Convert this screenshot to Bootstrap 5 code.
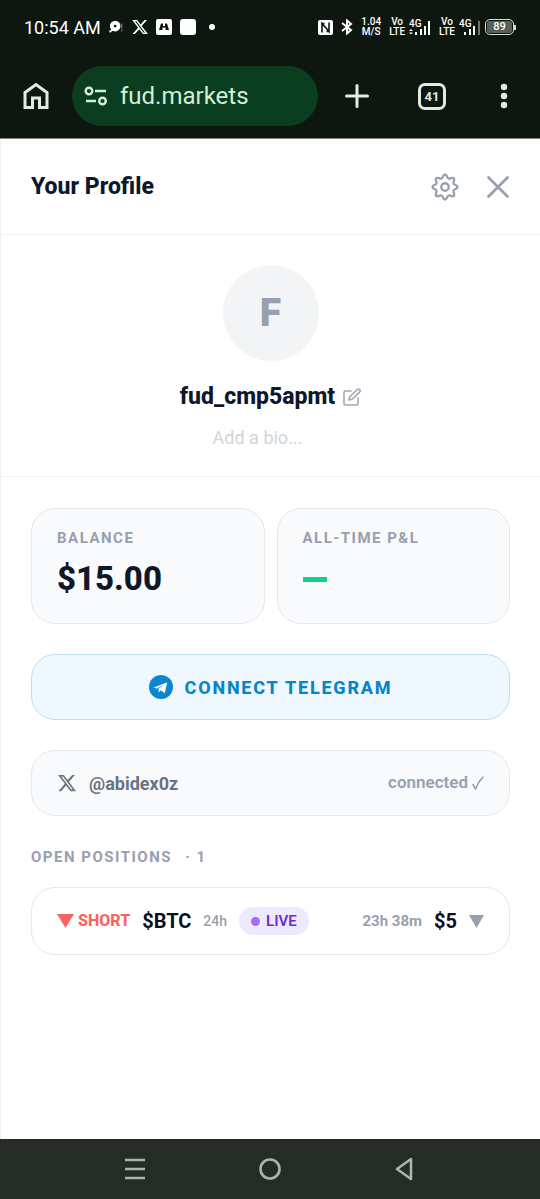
<!DOCTYPE html>
<html lang="en">
<head>
<meta charset="utf-8">
<meta name="viewport" content="width=device-width, initial-scale=1">
<title>Your Profile - fud.markets</title>
<link href="https://cdn.jsdelivr.net/npm/bootstrap@5.3.0/dist/css/bootstrap.min.css" rel="stylesheet">
<style>
  :root {
    --ink: #0f172a;
    --muted: #98a0ae;
    --line: #e5e7eb;
    --chrome: #0d160f;
    --chrome-fg: #e0ece1;
  }
  body { font-family: Roboto, "Liberation Sans", sans-serif; color: var(--ink); background: #fff; }
  button { font-family: inherit; }
  svg { display: block; flex-shrink: 0; }
  .plain { background: none; border: 0; padding: 0; display: flex; align-items: center; justify-content: center; }

  /* phone status bar */
  .status { background: var(--chrome); color: #fff; height: 54px; padding: 0 24px; font-size: 18px; }
  .tiny { font-size: 10px; line-height: 10px; font-weight: 500; text-align: center; }
  .signal { width: 22px; }
  .level { width: 29px; height: 16px; border: 1px solid #d8dcd8; border-radius: 5px; padding: 1px; }
  .level span { background: #596059; border-radius: 2px; font-size: 11px; line-height: 12px; font-weight: 500; display: block; text-align: center; }
  .nub { width: 2px; height: 5px; background: #d8dcd8; }

  /* browser toolbar */
  .toolbar { background: var(--chrome); height: 85px; border-bottom: 1px solid #7d837e; color: var(--chrome-fg); }
  .tool { width: 72px; height: 84px; color: var(--chrome-fg); flex-shrink: 0; }
  .tool-wide { width: 78px; }
  .address { background: #0b3d20; height: 60px; border-radius: 30px; padding: 0 12px; gap: 12px; min-width: 0; }
  .address input { background: none; border: 0; padding: 0; color: #d3efd5; font-size: 24px; min-width: 0; width: 100%; outline: 0; }
  .address .plain { color: #d3efd5; }
  .tabs { width: 28px; height: 27px; border: 3px solid var(--chrome-fg); border-radius: 7px; font-size: 13px; line-height: 21px; font-weight: 700; }

  /* profile panel */
  .panel { border-left: 1px solid #eceef1; }
  .panel-head { padding: 0 30px; height: 96px; border-bottom: 1px solid #f0f1f3; color: var(--muted); }
  .panel-head h1 { font-size: 23px; font-weight: 800; color: var(--ink); }
  .who { padding: 30px 30px 24px; border-bottom: 1px solid #f0f1f3; }
  .avatar { width: 96px; height: 96px; background: #f2f4f6; color: var(--muted); font-size: 39px; font-weight: 900; }
  .who h2 { font-size: 23px; line-height: 31px; font-weight: 800; margin: 0; }
  .bio { font-size: 18px; line-height: 28px; color: #d1d5db; padding-right: 26px; }
  .content { padding: 31px 30px; }
  .tile { border: 1px solid var(--line); border-radius: 24px; background: #f9fafc; }
  .stats { gap: 12px; margin-bottom: 30px; }
  .stat { padding: 18px 25px; height: 116px; }
  .caps { font-size: 15px; line-height: 22px; font-weight: 700; letter-spacing: .1em; color: var(--muted); margin: 0; }
  .figure { font-size: 33px; line-height: 42px; height: 42px; font-weight: 800; margin: 9px 0 0; }
  .up { width: 24px; height: 5px; background: #10d08c; }
  .telegram { height: 66px; background: #eff8ff; border-color: #b8e2f4; color: #0884cb; font-size: 18px; font-weight: 800; letter-spacing: .1em; gap: 12px; margin-bottom: 30px; }
  .account { height: 66px; padding: 0 25px; color: #6b7280; font-size: 18px; font-weight: 700; margin-bottom: 30px; }
  .linked { color: var(--muted); font-size: 17px; font-weight: 600; }
  .position { height: 68px; padding: 0 25px; background: #fff; color: #0b1020; margin-top: 19px; gap: 12px; }
  .short { color: #f76464; font-size: 16px; font-weight: 800; }
  .asset { font-size: 20px; font-weight: 700; }
  .term { font-size: 14px; font-weight: 500; color: var(--muted); }
  .left-time { font-size: 15px; font-weight: 700; color: var(--muted); }
  .live { background: #ede9fe; color: #6d28d9; font-size: 15px; font-weight: 600; line-height: 28px; border-radius: 14px; padding: 0 12px; gap: 6px; }
  .live-dot { width: 9px; height: 9px; background: #a66bf5; }

  /* phone navigation */
  .sysnav { background: #242c25; height: 60px; color: #abb3ab; padding: 0 12.5%; }
</style>
</head>
<body>
<div class="d-flex flex-column min-vh-100">

  <div class="status d-flex align-items-center justify-content-between">
    <div class="d-flex align-items-center gap-2">
      <span>10:54 AM</span>
      <svg width="15" height="16" viewBox="0 0 17 16" fill="#fff"><circle cx="7" cy="7" r="6"/><circle cx="1.500" cy="13" r="1.300"/><path d="M3 9l-1 4 4-1z"/><circle cx="7" cy="7" r="1.500" fill="#0d160f"/><path d="M14 4h1v6h-1zM14 11h1v2h-1z" opacity=".6"/></svg>
      <svg width="16" height="16" viewBox="1 1 22 22" fill="#fff"><path d="M18.244 2.250h3.308l-7.227 8.260 8.502 11.240H16.170l-5.214-6.817L4.990 21.750H1.680l7.730-8.835L1.254 2.250H8.080l4.713 6.231zm-1.161 17.520h1.833L7.084 4.126H5.117z"/></svg>
      <svg width="16" height="16" viewBox="0 0 16 16"><rect width="16" height="16" rx="2" fill="#fff"/><path d="M5 4.500h2V7h2V4.500h2L13 11H9.500V8.500h-3V11H3z" fill="#0d160f"/></svg>
      <svg width="16" height="16" viewBox="0 0 16 16"><rect width="16" height="16" rx="3" fill="#fff"/></svg>
      <svg width="16" height="6" viewBox="0 0 16 6"><circle cx="8" cy="3" r="3" fill="#fff"/></svg>
    </div>
    <div class="d-flex align-items-center">
      <svg class="me-2" width="15" height="15" viewBox="0 0 15 15"><rect width="15" height="15" rx="2" fill="#fff"/><path d="M4 12.500V3.500L11 11.500V2.500M4 3.500h2.500M11 11.500H8.500" stroke="#0d160f" stroke-width="1.600" fill="none"/></svg>
      <svg class="me-2" width="12" height="16" viewBox="0 0 12 16" fill="none" stroke="#fff" stroke-width="2"><path d="M1 4l9 7-4 3.500v-13L10 5l-9 7"/></svg>
      <div class="tiny me-2">1.04<br>M/S</div>
      <div class="tiny me-1">Vo<br>LTE</div>
      <svg class="signal me-2" height="18" viewBox="0 0 22 18" fill="#fff"><text x="0" y="9" font-size="10" font-weight="500">4G</text><path d="M0 13l2-2 2 2zM0 14.500l2 2 2-2zM6 14h2v3H6zM11 11h2v6h-2zM15 8h2v9h-2zM19 3h2v14h-2z"/></svg>
      <div class="tiny me-1">Vo<br>LTE</div>
      <svg class="signal me-1" height="18" viewBox="0 0 22 18" fill="#fff"><text x="0" y="9" font-size="10" font-weight="500">4G</text><path d="M5 14h2v3H5zM10 11h2v6h-2zM14 8h2v9h-2z"/><path d="M19 3h2v14h-2z" fill="#6f7670"/></svg>
      <div class="level"><span>89</span></div><div class="nub"></div>
    </div>
  </div>

  <header class="toolbar d-flex align-items-center">
    <button class="plain tool" aria-label="Home"><svg width="26" height="28" viewBox="0 0 26 28" fill="none" stroke="currentColor" stroke-width="3"><path d="M2 10.500L13 2.500l11 8V25.500h-7.500V16h-7v9.500H2z"/></svg></button>
    <div class="address d-flex align-items-center flex-fill">
      <button class="plain" aria-label="Site settings"><svg width="24" height="20" viewBox="0 0 24 20" fill="none" stroke="currentColor" stroke-width="2.400"><circle cx="5" cy="5" r="3.300"/><path d="M11 5h11M2 15h10"/><circle cx="18.500" cy="15" r="3.300"/></svg></button>
      <input type="text" value="fud.markets" aria-label="Address">
    </div>
    <button class="plain tool tool-wide" aria-label="New tab"><svg width="24" height="24" viewBox="0 0 24 24" stroke="currentColor" stroke-width="3" stroke-linecap="round"><path d="M12 1.500v21M1.500 12h21"/></svg></button>
    <button class="plain tool" aria-label="Switch tabs"><span class="tabs">41</span></button>
    <button class="plain tool" aria-label="More"><svg width="8" height="26" viewBox="0 0 8 26" fill="currentColor"><circle cx="4" cy="4" r="3.200"/><circle cx="4" cy="13" r="3.200"/><circle cx="4" cy="22" r="3.200"/></svg></button>
  </header>

  <main class="panel flex-fill">
    <div class="panel-head d-flex align-items-center">
      <h1 class="m-0 me-auto">Your Profile</h1>
      <button class="plain text-reset" aria-label="Settings"><svg width="28" height="28" viewBox="0 0 24 24" fill="none" stroke="currentColor" stroke-width="2" stroke-linejoin="round"><path d="M12 1.300c1.800 0 1.500 2.800 3.100 3.400 1.500.7 3.200-1.500 4.500-.2s-.9 3 -.3 4.500c.7 1.500 3.400 1.200 3.400 3s-2.700 1.500-3.400 3.100c-.6 1.500 1.600 3.200.3 4.500s-3-.9-4.500-.3c-1.600.7-1.300 3.400-3.100 3.400s-1.500-2.700-3.100-3.400c-1.500-.6-3.200 1.600-4.500.3s.9-3 .3-4.500C4 13.500 1.300 13.800 1.300 12S4 10.500 4.700 9c.6-1.500-1.600-3.200-.3-4.500s3 .9 4.500.2C10.500 4.100 10.200 1.300 12 1.300z"/><circle cx="12" cy="12" r="3.200"/></svg></button>
      <button class="plain text-reset ms-4" aria-label="Close"><svg width="27" height="24" viewBox="0 0 27 24" stroke="currentColor" stroke-width="2.800" stroke-linecap="round"><path d="M5.500 2.500l19 19M24.500 2.500l-19 19"/></svg></button>
    </div>

    <section class="who d-flex flex-column align-items-center">
      <div class="avatar rounded-circle d-flex align-items-center justify-content-center">F</div>
      <div class="d-flex align-items-center gap-2 mt-3 pt-1">
        <h2>fud_cmp5apmt</h2>
        <button class="plain" aria-label="Edit name"><svg width="18" height="18" viewBox="0 0 18 18" fill="none" stroke="#a2a8b3" stroke-width="1.600" stroke-linejoin="round" stroke-linecap="round"><path d="M8 3H2.500Q1 3 1 4.500v11Q1 17 2.500 17h11q1.500 0 1.500-1.500V10"/><path d="M14.300 1.500a1.700 1.700 0 0 1 2.400 2.400L9.200 11.300 6 12l.8-3.200z"/></svg></button>
      </div>
      <button class="plain bio mt-2 pt-1">Add a bio...</button>
    </section>

    <div class="content">
      <div class="stats d-flex">
        <div class="tile stat flex-fill w-50">
          <p class="caps">BALANCE</p>
          <p class="figure">$15.00</p>
        </div>
        <div class="tile stat flex-fill w-50">
          <p class="caps">ALL-TIME P&amp;L</p>
          <div class="figure d-flex align-items-center"><div class="up" role="img" aria-label="No profit or loss yet"></div></div>
        </div>
      </div>

      <button class="tile telegram w-100 d-flex align-items-center justify-content-center">
        <svg width="24" height="24" viewBox="0 0 24 24"><circle cx="12" cy="12" r="12" fill="#0b87d0"/><path d="M4.300 12.800L18.200 7.300 15.800 18.200 11.800 15.300 9.800 17.400 9.500 13.700 15.200 9.400 8.200 13.500z" fill="#fff"/></svg>
        <span>CONNECT TELEGRAM</span>
      </button>

      <div class="tile account d-flex align-items-center">
        <svg width="20" height="20" viewBox="0 0 24 24" fill="currentColor"><path d="M18.244 2.250h3.308l-7.227 8.260 8.502 11.240H16.170l-5.214-6.817L4.990 21.750H1.680l7.730-8.835L1.254 2.250H8.080l4.713 6.231zm-1.161 17.520h1.833L7.084 4.126H5.117z"/></svg>
        <span class="ms-2 ps-1 me-auto">@abidex0z</span>
        <span class="linked">connected</span>
        <svg class="ms-1" width="12" height="14" viewBox="0 0 12 14" fill="none" stroke="#98a0ae" stroke-width="1.600" stroke-linecap="round"><path d="M1 8.500L3.500 13Q6 6 11 1"/></svg>
      </div>

      <h3 class="caps">OPEN POSITIONS <span class="ms-2">· 1</span></h3>

      <button class="tile position w-100 d-flex align-items-center">
        <span class="short d-flex align-items-center gap-1"><svg width="17" height="14" viewBox="0 0 17 14" fill="currentColor"><path d="M0 0h17L8.500 14z"/></svg>SHORT</span>
        <span class="asset">$BTC</span>
        <span class="term">24h</span>
        <span class="live d-flex align-items-center me-auto"><span class="live-dot rounded-circle"></span>LIVE</span>
        <span class="left-time">23h 38m</span>
        <span class="asset">$5</span>
        <svg width="15" height="13" viewBox="0 0 15 13" fill="#98a0ae"><path d="M0 0h15L7.500 13z"/></svg>
      </button>
    </div>
  </main>

  <nav class="sysnav d-flex align-items-stretch">
    <button class="plain text-reset flex-fill" aria-label="Recent apps"><svg width="20" height="22" viewBox="0 0 20 22" stroke="currentColor" stroke-width="2.600"><path d="M0 2h20M0 11h20M0 20h20"/></svg></button>
    <button class="plain text-reset flex-fill" aria-label="Home screen"><svg width="22" height="22" viewBox="0 0 22 22" fill="none" stroke="currentColor" stroke-width="2.600"><circle cx="11" cy="11" r="9.500"/></svg></button>
    <button class="plain text-reset flex-fill" aria-label="Back"><svg width="20" height="24" viewBox="0 0 20 24" fill="none" stroke="currentColor" stroke-width="2.600" stroke-linejoin="round"><path d="M16 2v20L2 12z"/></svg></button>
  </nav>
</div>
<script src="https://cdn.jsdelivr.net/npm/bootstrap@5.3.0/dist/js/bootstrap.bundle.min.js"></script>
</body>
</html>
